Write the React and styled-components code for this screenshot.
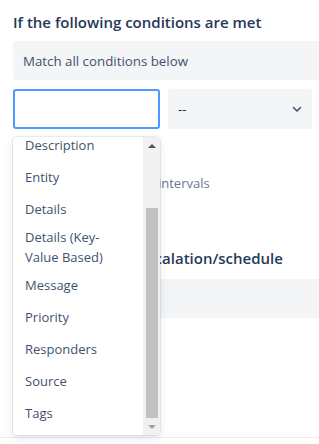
import React from 'react';
import styled, { createGlobalStyle } from 'styled-components';

const GlobalStyle = createGlobalStyle`
  html, body {
    margin: 0;
    padding: 0;
    background: #ffffff;
    overflow: hidden;
  }
  body {
    font-family: 'Open Sans', 'Noto Sans', sans-serif;
    color: #172b4d;
  }
`;

const Page = styled.div`
  position: relative;
  width: 319px;
  height: 444px;
  overflow: hidden;
`;

const Form = styled.div`
  padding: 12px 0 0 13px;
  height: 425px;
  border-bottom: 1px solid #ebecf0;
`;

const Heading = styled.h3`
  margin: ${({ $top }) => $top || 0}px 0 0;
  font-size: 15px;
  line-height: 20px;
  font-weight: 600;
  color: #253858;
  white-space: nowrap;
`;

const GreyBox = styled.div`
  margin-top: ${({ $top }) => $top}px;
  height: 39px;
  background: #f4f5f7;
  border-radius: 3px 0 0 3px;
  display: flex;
  align-items: center;
  padding-left: 10px;
  font-size: 13.3px;
  color: #42526e;
`;

const Row = styled.div`
  margin-top: 9px;
  display: flex;
  gap: 8px;
  position: relative;
`;

const Input = styled.div`
  box-sizing: border-box;
  width: 147px;
  height: 40px;
  border: 2px solid #4c9aff;
  border-radius: 3px;
  background: #fff;
`;

const Select = styled.div`
  box-sizing: border-box;
  width: 144px;
  height: 40px;
  border-radius: 3px;
  background: #f4f5f7;
  display: flex;
  align-items: center;
  justify-content: space-between;
  padding: 0 9px 0 10px;
  font-size: 13px;
  color: #172b4d;
`;

const Hint = styled.div`
  margin-top: 44px;
  font-size: 13px;
  line-height: 20px;
  color: #6b778c;
  white-space: nowrap;
`;

const Menu = styled.div`
  position: absolute;
  top: 48px;
  left: 0;
  width: 147px;
  height: 298px;
  display: flex;
  background: #fff;
  border-radius: 4px;
  overflow: hidden;
  box-shadow: 0 0 0 1px rgba(9, 30, 66, 0.07), 0 3px 8px rgba(9, 30, 66, 0.12);
  z-index: 10;
`;

const List = styled.div`
  flex: 1;
  overflow: hidden;
`;

const ListInner = styled.div`
  margin-top: -72px;
`;

const Option = styled.div`
  box-sizing: border-box;
  min-height: 32px;
  display: flex;
  align-items: center;
  padding: 2px 12px;
  font-size: 13px;
  line-height: 20px;
  color: #42526e;
`;

const Scrollbar = styled.div`
  width: 17px;
  background: #f1f1f1;
  display: flex;
  flex-direction: column;
  align-items: center;
`;

const Arrow = styled.div`
  height: 17px;
  width: 17px;
  display: flex;
  align-items: center;
  justify-content: center;

  &::after {
    content: '';
    border-left: 4px solid transparent;
    border-right: 4px solid transparent;
    ${({ $down, $disabled }) =>
      $down
        ? `border-top: 4px solid ${$disabled ? '#a3a3a3' : '#505050'};`
        : `border-bottom: 4px solid ${$disabled ? '#a3a3a3' : '#505050'};`}
  }
`;

const Track = styled.div`
  flex: 1;
  width: 100%;
  display: flex;
  flex-direction: column;
  justify-content: flex-end;
  align-items: center;
`;

const Thumb = styled.div`
  width: 12px;
  height: ${({ $size }) => $size}px;
  background: #c1c1c1;
`;

const Chevron = () => (
  <svg width="12" height="12" viewBox="0 0 12 12">
    <path d="M2.5 4.5 L6 8 L9.5 4.5" fill="none" stroke="#42526e" strokeWidth="1.6" strokeLinecap="round" strokeLinejoin="round" />
  </svg>
);

const options = [
  'Actions',
  'Alias',
  'Description',
  'Entity',
  'Details',
  'Details (Key-Value Based)',
  'Message',
  'Priority',
  'Responders',
  'Source',
  'Tags',
];

export default function App() {
  return (
    <Page>
      <GlobalStyle />
      <Form>
        <Heading>If the following conditions are met</Heading>
        <GreyBox $top={9}>Match all conditions below</GreyBox>
        <Row>
          <Input />
          <Select>
            <span>--</span>
            <Chevron />
          </Select>
          <Menu>
            <List>
              <ListInner>
                {options.map((o) => (
                  <Option key={o}>{o}</Option>
                ))}
              </ListInner>
            </List>
            <Scrollbar>
              <Arrow />
              <Track>
                <Thumb $size={210} />
              </Track>
              <Arrow $down $disabled />
            </Scrollbar>
          </Menu>
        </Row>
        <Hint>Check the conditions at intervals</Hint>
        <Heading $top={55}>Route alert to an escalation/schedule</Heading>
        <GreyBox $top={11} />
      </Form>
    </Page>
  );
}
